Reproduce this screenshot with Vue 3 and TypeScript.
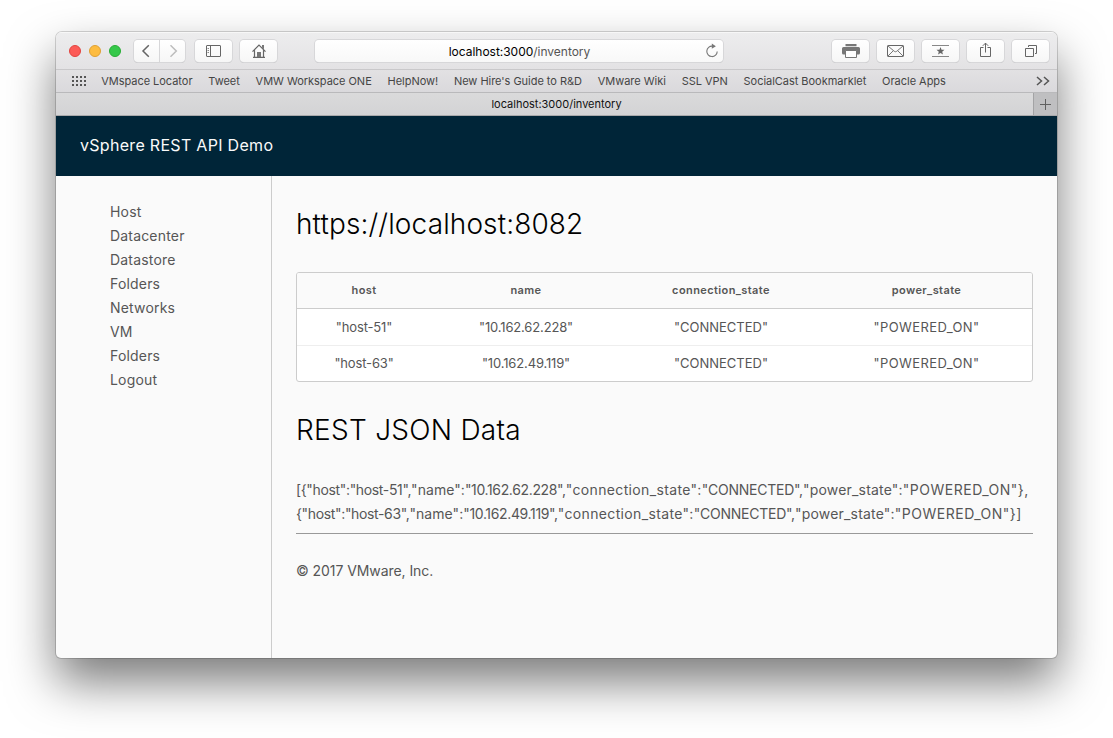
<script setup lang="ts">
interface HostRow {
  host: string
  name: string
  connection_state: string
  power_state: string
}

interface Token {
  kind: string
  text: string
}

const bookmarks: string[] = [
  'VMspace Locator',
  'Tweet',
  'VMW Workspace ONE',
  'HelpNow!',
  "New Hire's Guide to R&D",
  'VMware Wiki',
  'SSL VPN',
  'SocialCast Bookmarklet',
  'Oracle Apps',
]

const links: string[] = ['Host', 'Datacenter', 'Datastore', 'Folders', 'Networks', 'VM', 'Folders', 'Logout']

const columns: (keyof HostRow)[] = ['host', 'name', 'connection_state', 'power_state']

const rows: HostRow[] = [
  { host: 'host-51', name: '10.162.62.228', connection_state: 'CONNECTED', power_state: 'POWERED_ON' },
  { host: 'host-63', name: '10.162.49.119', connection_state: 'CONNECTED', power_state: 'POWERED_ON' },
]

// One line per row, split into key and value tokens.
const jsonLines: Token[][] = rows.map((row, i) =>
  columns.flatMap((c, j) => {
    const open = j === 0 ? (i === 0 ? '[{' : '{') : ''
    const close = j < columns.length - 1 ? ',' : i < rows.length - 1 ? '},' : '}]'
    return [
      { kind: `key-${c}`, text: `${open}"${c}":` },
      { kind: `value-${c}`, text: `"${row[c]}"${close}` },
    ]
  }),
)
</script>

<template>
  <div class="desktop">
    <div class="window">
      <div class="toolbar">
        <div class="lights">
          <i class="light red"></i>
          <i class="light yellow"></i>
          <i class="light green"></i>
        </div>
        <div class="nav">
          <span class="btn back">
            <svg width="25" height="22" viewBox="0 0 25 22"><path d="M14.800 5.200 9 11l5.800 5.800" fill="none" stroke="#656565" stroke-width="1.5" /></svg>
          </span>
          <span class="btn forward">
            <svg width="25" height="22" viewBox="0 0 25 22"><path d="M10.500 5.200 16.300 11l-5.800 5.800" fill="none" stroke="#bdbdbd" stroke-width="1.5" /></svg>
          </span>
        </div>
        <span class="btn wide side">
          <svg width="17" height="14" viewBox="0 0 17 14" fill="none" stroke="#666">
            <rect x="1.5" y="1.5" width="14" height="11" rx=".5" />
            <path d="M5.500 1.500v11" />
            <path d="M2.500 4.500H4M2.500 6.500H4M2.500 8.500H4" stroke="#888" />
          </svg>
        </span>
        <span class="btn wide home">
          <svg width="16" height="16" viewBox="0 0 16 16" fill="none" stroke="#666">
            <path d="M1.500 8.700 8 2.200l6.500 6.500M3.500 7.200v7M12.500 7.200v7M2 14.400h12" stroke-width="1.2" />
            <path d="M11 2h2v4.500l-2-2zM6 9h4v5H6z" fill="#777" stroke="none" />
          </svg>
        </span>
        <div class="address">
          <span class="url">localhost:3000<em>/inventory</em></span>
          <svg class="reload" width="14" height="16" viewBox="0 0 14 16">
            <path d="M7.500 3.200A5.200 5.200 0 1 0 12.200 8.400" fill="none" stroke="#777" stroke-width="1.1" />
            <path d="M6.800.600 10.900 3.200 6.800 5.800z" fill="#777" />
          </svg>
        </div>
        <div class="tools">
          <span class="btn wide">
            <svg width="18" height="16" viewBox="0 0 18 16">
              <path d="M3.500 1h11v2.200h-11z" fill="#777" />
              <path d="M1.500 4h15a1.500 1.500 0 0 1 1.500 1.500V10a1.500 1.500 0 0 1-1.500 1.500h-15A1.500 1.500 0 0 1 0 10V5.500A1.500 1.500 0 0 1 1.500 4z" fill="#777" />
              <path d="M3.500 7.500h11v7h-11z" fill="#fff" stroke="#777" />
            </svg>
          </span>
          <span class="btn wide">
            <svg width="19" height="14" viewBox="0 0 19 14" fill="none" stroke="#666">
              <rect x="1.5" y="1.5" width="16" height="11" rx=".6" />
              <path d="m2 2 6.300 5.300q1.200.9 2.400 0L17 2M2 12l5-5M17 12l-5-5" stroke-width=".9" />
            </svg>
          </span>
          <span class="btn wide">
            <svg width="19" height="14" viewBox="0 0 19 14">
              <path d="M1 1.500h17M1 12.500h17" stroke="#888" />
              <path d="m9.500 2.900 1.050 2.750 2.950.15-2.300 1.850.8 2.850-2.500-1.600-2.500 1.600.8-2.850-2.300-1.850 2.950-.15z" fill="#666" />
            </svg>
          </span>
          <span class="btn wide">
            <svg class="share" width="13" height="16" viewBox="0 0 13 16" fill="none" stroke="#666">
              <path d="M4.500 5.500h-3v9h10v-9h-3M6.500 10.500V1.200M3.800 3.800l2.700-2.700 2.700 2.700" />
            </svg>
          </span>
          <span class="btn wide">
            <svg width="14" height="14" viewBox="0 0 14 14" fill="none" stroke="#666">
              <path d="M1.500 4.500h8v8h-8zM4.500 3V1.500h8v8H11" />
            </svg>
          </span>
        </div>
      </div>

      <div class="bookmarks">
        <svg class="dots" width="15" height="11" viewBox="0 0 15 11">
          <g fill="#555">
            <template v-for="r in 3" :key="r">
              <rect v-for="c in 4" :key="c" :x="(c - 1) * 4" :y="(r - 1) * 4" width="2" height="2" />
            </template>
          </g>
        </svg>
        <span v-for="b in bookmarks" :key="b" class="bookmark">{{ b }}</span>
        <svg class="more" width="14" height="10" viewBox="0 0 14 10" fill="none" stroke="#555" stroke-width="1.5">
          <path d="m1 1 4.500 4L1 9M8 1l4.500 4L8 9" />
        </svg>
      </div>

      <div class="tabs">
        <div class="tab"><span>localhost:3000/inventory</span></div>
        <div class="add">
          <svg width="11" height="11" viewBox="0 0 11 11"><path d="M5.500 0v11M0 5.500h11" stroke="#606060" /></svg>
        </div>
      </div>

      <header class="header"><span>vSphere REST API Demo</span></header>

      <div class="body">
        <nav class="sidebar">
          <a v-for="(l, i) in links" :key="i">{{ l }}</a>
        </nav>
        <main class="main">
          <h1 class="host-title">https://localhost:8082</h1>
          <table class="grid">
            <colgroup>
              <col class="c1" />
              <col class="c2" />
              <col class="c3" />
              <col class="c4" />
            </colgroup>
            <thead>
              <tr><th v-for="c in columns" :key="c">{{ c }}</th></tr>
            </thead>
            <tbody>
              <tr v-for="r in rows" :key="r.host">
                <td v-for="c in columns" :key="c" :class="c">"{{ r[c] }}"</td>
              </tr>
            </tbody>
          </table>
          <h1 class="json-title">REST JSON Data</h1>
          <div class="json">
            <div v-for="(line, i) in jsonLines" :key="i"><span v-for="t in line" :key="t.kind" :class="t.kind">{{ t.text }}</span></div>
          </div>
          <hr />
          <p class="copy">© 2017 VMware, Inc.</p>
        </main>
      </div>
    </div>
  </div>
</template>

<style>
body {
  background: #fff;
  overflow: hidden;
}
</style>

<style scoped>
.desktop {
  box-sizing: border-box;
  width: 1113px;
  height: 738px;
  padding: 32px 56px 80px;
  overflow: hidden;
  font-family: Inter, 'Liberation Sans', sans-serif;
}
.window {
  display: flex;
  flex-direction: column;
  width: 1001px;
  height: 626px;
  border-radius: 6px 6px 5px 5px;
  overflow: hidden;
  background: #fafafa;
  box-shadow: 0 0 0 1px rgba(0, 0, 0, 0.16), 0 24px 48px rgba(0, 0, 0, 0.52);
}
.toolbar {
  box-sizing: border-box;
  height: 38px;
  flex: none;
  display: flex;
  align-items: center;
  padding: 0 8px 0 13px;
  background: linear-gradient(#ededee, #e3e2e4);
  border-bottom: 1px solid #c9c8ca;
  box-shadow: inset 0 1px #f7f7f7;
}
.lights {
  display: flex;
  gap: 8px;
}
.light {
  box-sizing: border-box;
  width: 12px;
  height: 12px;
  border-radius: 50%;
}
.red {
  background: #fc5b57;
  border: 1px solid #e2443f;
}
.yellow {
  background: #fdbc40;
  border: 1px solid #dfa033;
}
.green {
  background: #35c84a;
  border: 1px solid #28ad35;
}
.btn {
  display: flex;
  align-items: center;
  justify-content: center;
  height: 22px;
  border-radius: 4px;
  background: linear-gradient(#fff, #f6f6f6);
  box-shadow: 0 0 0 1px #d7d7d9, 0 1px 0 0 #bebec0;
}
.nav {
  display: flex;
  gap: 1px;
  margin-left: 13px;
}
.back {
  width: 25px;
  border-radius: 4px 0 0 4px;
}
.forward {
  width: 25px;
  border-radius: 0 4px 4px 0;
}
.wide {
  width: 37px;
}
.side {
  margin-left: 10px;
}
.home {
  margin-left: 8px;
}
.address {
  position: relative;
  display: flex;
  align-items: center;
  justify-content: center;
  width: 408px;
  height: 22px;
  margin-left: 38px;
  border-radius: 4px;
  background: linear-gradient(#fff, #f8f8f8);
  box-shadow: 0 0 0 1px #d7d7d9, 0 1px 0 0 #bebec0;
}
.url {
  padding: 1px 0 0 1px;
  font-size: 12px;
  letter-spacing: -0.02px;
  color: #000;
}
.url em {
  font-style: normal;
  color: #555;
}
.reload {
  position: absolute;
  right: 4px;
  top: 3px;
}
.share {
  margin-bottom: 1px;
}
.tools {
  display: flex;
  gap: 8px;
  margin-left: auto;
}
.bookmarks {
  box-sizing: border-box;
  height: 23px;
  flex: none;
  display: flex;
  align-items: center;
  gap: 15.8px;
  padding: 0 7px 0 16px;
  background: linear-gradient(#e2e1e3, #dad9dc);
  border-bottom: 1px solid #b9b9bb;
  font-size: 11px;
  letter-spacing: -0.03px;
  color: #454545;
  white-space: nowrap;
}
.dots {
  margin-right: -1.6px;
}
.more {
  margin-left: auto;
}
.tabs {
  box-sizing: border-box;
  height: 23px;
  flex: none;
  display: flex;
  border-bottom: 1px solid #a9a9ab;
  background: linear-gradient(#dadadb, #d3d3d5);
  font-size: 11px;
  color: #111;
}
.tab {
  flex: 1;
  display: flex;
  align-items: center;
  justify-content: center;
  padding-left: 24px;
}
.add {
  width: 23px;
  display: flex;
  align-items: center;
  justify-content: center;
  background: #bfbfc1;
  border-left: 1px solid #a3a3a5;
}
.header {
  box-sizing: border-box;
  height: 60px;
  flex: none;
  display: flex;
  align-items: center;
  padding: 0 0 2px 24px;
  background: #002538;
  color: #fafafa;
  font-size: 16px;
  letter-spacing: 0.3px;
}
.body {
  flex: 1;
  display: flex;
}
.sidebar {
  box-sizing: border-box;
  flex: none;
  width: 216px;
  padding: 24px 0 0 54px;
  border-right: 1px solid #ccc;
  display: flex;
  flex-direction: column;
  font-size: 14px;
  letter-spacing: 0.18px;
  line-height: 24px;
  color: #565656;
}
.main {
  flex: 1;
  min-width: 0;
  padding: 24px 24px 0;
  color: #565656;
}
h1 {
  margin: 0;
  font-size: 28px;
  font-weight: 300;
  line-height: 48px;
  color: #000;
  white-space: nowrap;
}
.host-title {
  letter-spacing: 0.12px;
}
.grid {
  width: 737px;
  margin-top: 24px;
  table-layout: fixed;
  border-collapse: separate;
  border-spacing: 0;
  border: 1px solid #ccc;
  border-radius: 3px;
  background: #fff;
  font-size: 13px;
  text-align: center;
}
.c1 {
  width: 134px;
}
.c2 {
  width: 190px;
}
.c3 {
  width: 200px;
}
.c4 {
  width: 211px;
}
th {
  box-sizing: border-box;
  height: 36px;
  padding: 0 0 2px;
  border-bottom: 1px solid #ccc;
  background: #fafafa;
  font-size: 11px;
  font-weight: 600;
  letter-spacing: 0.4px;
}
th:first-child {
  border-top-left-radius: 2px;
}
th:last-child {
  border-top-right-radius: 2px;
}
td {
  box-sizing: border-box;
  height: 36px;
  padding: 0 0 1px;
}
td.host,
td.name {
  letter-spacing: -0.15px;
}
td.power_state {
  letter-spacing: 0.4px;
}
tr + tr td {
  padding-bottom: 2px;
  border-top: 1px solid #eee;
}
.json-title {
  margin-top: 24px;
  letter-spacing: 0.27px;
}
.json {
  margin-top: 24px;
  font-size: 14px;
  line-height: 24px;
  white-space: nowrap;
}
.key-host,
.value-host {
  letter-spacing: -0.35px;
}
.key-name {
  letter-spacing: 0.05px;
}
.value-name {
  letter-spacing: -0.35px;
}
.key-connection_state {
  letter-spacing: 0.35px;
}
.value-connection_state {
  letter-spacing: -0.25px;
}
.key-power_state {
  letter-spacing: 0.2px;
}
.value-power_state {
  letter-spacing: 0.5px;
}
hr {
  height: 1px;
  margin: 7px 0 0;
  border: 0;
  background: #999;
}
.copy {
  margin: 25px 0 0;
  font-size: 14px;
  letter-spacing: -0.07px;
  line-height: 24px;
}
</style>
